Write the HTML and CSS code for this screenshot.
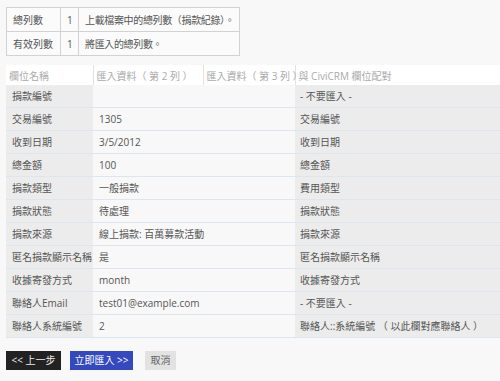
FILE: index.html
```html
<!DOCTYPE html>
<html lang="zh-Hant">
<head>
<meta charset="utf-8">
<link rel="stylesheet" href="styles.css">
</head>
<body>
<table class="summary">
  <tr><td class="s-label">總列數</td><td class="s-num">1</td><td class="s-desc">上載檔案中的總列數（捐款紀錄）。</td></tr>
  <tr><td class="s-label">有效列數</td><td class="s-num">1</td><td class="s-desc">將匯入的總列數。</td></tr>
</table>

<table class="map">
  <colgroup>
    <col class="c1"><col class="c2"><col class="c3"><col class="c4">
  </colgroup>
  <thead>
    <tr><th>欄位名稱</th><th>匯入資料（ 第 2 列 ）</th><th>匯入資料（ 第 3 列 ）</th><th>與 CiviCRM 欄位配對</th></tr>
  </thead>
  <tbody>
    <tr><td class="name">捐款編號</td><td></td><td></td><td class="target">- 不要匯入 -</td></tr>
    <tr><td class="name">交易編號</td><td>1305</td><td></td><td class="target">交易編號</td></tr>
    <tr><td class="name">收到日期</td><td>3/5/2012</td><td></td><td class="target">收到日期</td></tr>
    <tr><td class="name">總金額</td><td>100</td><td></td><td class="target">總金額</td></tr>
    <tr><td class="name">捐款類型</td><td>一般捐款</td><td></td><td class="target">費用類型</td></tr>
    <tr><td class="name">捐款狀態</td><td>待處理</td><td></td><td class="target">捐款狀態</td></tr>
    <tr><td class="name">捐款來源</td><td>線上捐款: 百萬募款活動</td><td></td><td class="target">捐款來源</td></tr>
    <tr><td class="name">匿名捐款顯示名稱</td><td>是</td><td></td><td class="target">匿名捐款顯示名稱</td></tr>
    <tr><td class="name">收據寄發方式</td><td>month</td><td></td><td class="target">收據寄發方式</td></tr>
    <tr><td class="name">聯絡人Email</td><td>test01@example.com</td><td></td><td class="target">- 不要匯入 -</td></tr>
    <tr><td class="name">聯絡人系統編號</td><td>2</td><td></td><td class="target">聯絡人::系統編號 （ 以此欄對應聯絡人 ）</td></tr>
  </tbody>
</table>

<div class="actions">
  <button class="btn btn-back">&lt;&lt; 上一步</button>
  <button class="btn btn-import">立即匯入 &gt;&gt;</button>
  <button class="btn btn-cancel">取消</button>
</div>
</body>
</html>
```

FILE: styles.css
```css
html, body {
  margin: 0;
  padding: 0;
  background: #f8f8f8;
}
body {
  padding: 7px 6px;
  font-family: "Open Sans", "Noto Sans CJK TC", sans-serif;
  font-size: 10px;
  color: #555;
}
table {
  border-collapse: collapse;
  border-spacing: 0;
}
.summary {
  width: 234px;
  background: #fbfbfb;
  table-layout: fixed;
}
.summary td {
  border: 1px solid #d2d2d2;
  height: 23px;
  padding: 0 6px;
  white-space: nowrap;
  line-height: 14px;
}
.summary .s-label { width: 41px; }
.summary .s-num { width: 5px; }
.summary .s-desc {
  padding: 0 4px 0 6px;
  letter-spacing: -0.35px;
}
.map {
  margin-top: 9px;
  width: 494px;
  table-layout: fixed;
}
.map .c1 { width: 87px; }
.map .c2 { width: 110px; }
.map .c3 { width: 92px; }
.map .c4 { width: 205px; }
.map th {
  background: #fff;
  color: #aaa;
  font-weight: normal;
  text-align: left;
  height: 20px;
  padding: 0 3px;
  border-left: 1px solid #e2e2e2;
  white-space: nowrap;
}
.map th:first-child { border-left: none; }
.map td {
  height: 22px;
  padding: 0 6px;
  border-bottom: 1px solid #dde5ee;
  white-space: nowrap;
  line-height: 14px;
}
.map td.name {
  background: #ececec;
}
.map td.target {
  background: #ececec;
  padding-left: 5px;
}
.actions {
  display: flex;
  gap: 10px;
  margin-top: 13px;
}
.btn {
  font-family: inherit;
  font-size: 10px;
  border: none;
  height: 19px;
  padding: 0;
  margin: 0;
  line-height: 19px;
  white-space: nowrap;
  text-align: center;
}
.btn-back {
  background: #222;
  color: #eee;
  width: 55px;
}
.btn-import {
  background: #3448bf;
  color: #fff;
  width: 63px;
  margin-left: -1px;
}
.btn-cancel {
  background: #e2e2e2;
  color: #666;
  width: 31px;
  margin-left: 2px;
}
```
